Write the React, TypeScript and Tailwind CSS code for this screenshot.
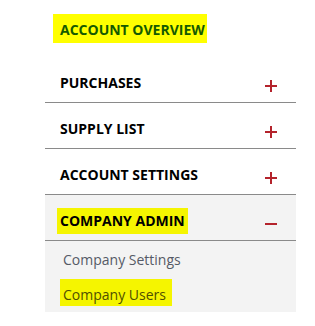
import { useState } from 'react';

const sections = [
  { label: 'PURCHASES', items: [] as string[] },
  { label: 'SUPPLY LIST', items: [] as string[] },
  { label: 'ACCOUNT SETTINGS', items: [] as string[] },
  { label: 'COMPANY ADMIN', items: ['Company Settings', 'Company Users'] },
];

function Plus() {
  return (
    <svg width="12" height="12" viewBox="0 0 12 12" className="mt-[7px] shrink-0">
      <rect x="5" y="0" width="2" height="12" fill="#b4232c" />
      <rect x="0" y="5" width="12" height="2" fill="#b4232c" />
    </svg>
  );
}

function Minus() {
  return (
    <svg width="12" height="12" viewBox="0 0 12 12" className="mt-[7px] shrink-0">
      <rect x="0" y="5" width="12" height="2" fill="#b4232c" />
    </svg>
  );
}

export default function App() {
  const [open, setOpen] = useState('COMPANY ADMIN');

  return (
    <div className="w-[315px] h-[326px] bg-white pl-[45px] pt-[14px] font-['Open_Sans',sans-serif]">
      <div className="w-[251px]">
        {/* Title */}
        <div className="pl-[8px]">
          <span className="inline-block bg-[#ffff00] pl-[7px] pr-[2px] pt-[6px] pb-[3px] text-[14px] leading-[20px] font-bold text-[#145a00]">
            ACCOUNT OVERVIEW
          </span>
        </div>

        <div className="mt-[14px]">
          {sections.map((s) => {
            const isOpen = open === s.label;
            const highlighted = s.label === 'COMPANY ADMIN';
            return (
              <div key={s.label} className={isOpen ? 'bg-[#f3f3f3]' : ''}>
                <button
                  onClick={() => setOpen(isOpen ? '' : s.label)}
                  className="w-full flex items-start justify-between pl-[15px] pr-[19px] pt-[16px] pb-[9px] border-b border-[#8a8a8a] text-left"
                >
                  {highlighted ? (
                    <span className="bg-[#f5f500] -ml-[3px] pl-[3px] pr-[3px] -my-[3px] py-[3px] text-[14px] leading-[20px] font-bold text-black">
                      {s.label}
                    </span>
                  ) : (
                    <span className="text-[14px] leading-[20px] font-bold text-black">{s.label}</span>
                  )}
                  {isOpen ? <Minus /> : <Plus />}
                </button>
                {isOpen && s.items.length > 0 && (
                  <div className="pt-[9px] pb-[6px]">
                    {s.items.map((item) =>
                      item === 'Company Users' ? (
                        <div key={item} className="pl-[15px] mt-[9px]">
                          <span className="inline-block bg-[#f5f500] pl-[3px] pr-[6px] pt-[6px] pb-[1px] text-[14px] leading-[20px] text-[#505000]">
                            {item}
                          </span>
                        </div>
                      ) : (
                        <div key={item} className="pl-[18px] text-[14px] leading-[20px] text-[#555a66]">
                          {item}
                        </div>
                      )
                    )}
                  </div>
                )}
              </div>
            );
          })}
        </div>
      </div>
    </div>
  );
}
